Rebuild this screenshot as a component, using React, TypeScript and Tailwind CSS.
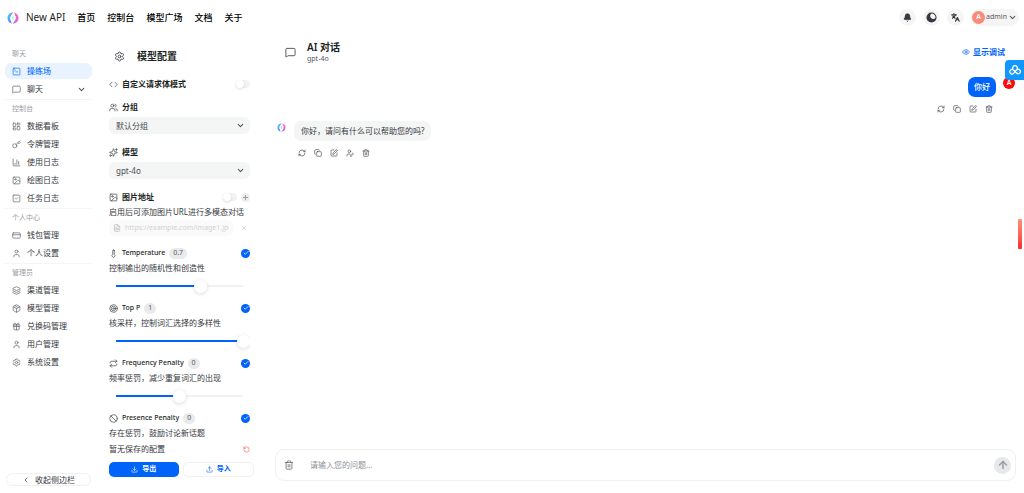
import { useState, type ReactNode } from 'react';
import {
  ArrowUp, Ban, Bell, ChartColumn, Check, ChevronDown, ChevronLeft, Code, Copy, CreditCard, Download, Eye,
  FileText, Gift, Image, Key, Languages, Layers, LayoutDashboard, MessageSquare, Package, Plus, RefreshCw,
  Repeat, RotateCcw, Settings, Sparkles, SquareCheck, SquarePen, SquareTerminal, Target, Thermometer, Trash2,
  Upload, User, UserPen, Users, X, type LucideIcon,
} from 'lucide-react';

type NavItem = { label: string; icon: LucideIcon; active?: boolean; expandable?: boolean };

const topLinks = ['首页', '控制台', '模型广场', '文档', '关于'];

const groups: { title: string; items: NavItem[] }[] = [
  {
    title: '聊天',
    items: [
      { label: '操练场', icon: SquareTerminal, active: true },
      { label: '聊天', icon: MessageSquare, expandable: true },
    ],
  },
  {
    title: '控制台',
    items: [
      { label: '数据看板', icon: LayoutDashboard },
      { label: '令牌管理', icon: Key },
      { label: '使用日志', icon: ChartColumn },
      { label: '绘图日志', icon: Image },
      { label: '任务日志', icon: SquareCheck },
    ],
  },
  {
    title: '个人中心',
    items: [
      { label: '钱包管理', icon: CreditCard },
      { label: '个人设置', icon: User },
    ],
  },
  {
    title: '管理员',
    items: [
      { label: '渠道管理', icon: Layers },
      { label: '模型管理', icon: Package },
      { label: '兑换码管理', icon: Gift },
      { label: '用户管理', icon: User },
      { label: '系统设置', icon: Settings },
    ],
  },
];

const sliders = [
  { id: 'temperature', label: 'Temperature', icon: Thermometer, hint: '控制输出的随机性和创造性', min: 0.1, max: 1, value: 0.7 },
  { id: 'top-p', label: 'Top P', icon: Target, hint: '核采样，控制词汇选择的多样性', min: 0.1, max: 1, value: 1 },
  { id: 'frequency', label: 'Frequency Penalty', icon: Repeat, hint: '频率惩罚，减少重复词汇的出现', min: -2, max: 2, value: 0 },
  { id: 'presence', label: 'Presence Penalty', icon: Ban, hint: '存在惩罚，鼓励讨论新话题', min: -2, max: 2, value: 0 },
];

function Logo({ className }: { className: string }) {
  return (
    <svg viewBox="0 0 24 24" fill="none" className={className} aria-hidden="true">
      <defs>
        <linearGradient id="logo-left" x1="0" y1="0" x2="0" y2="1">
          <stop offset="0" stopColor="#7f8cf7" />
          <stop offset="0.4" stopColor="#35c5f7" />
          <stop offset="0.7" stopColor="#4aa6f5" />
          <stop offset="1" stopColor="#a35cf0" />
        </linearGradient>
        <linearGradient id="logo-right" x1="0" y1="0" x2="0" y2="1">
          <stop offset="0" stopColor="#f56ad0" />
          <stop offset="0.55" stopColor="#f95fc4" />
          <stop offset="1" stopColor="#9a6cf5" />
        </linearGradient>
      </defs>
      <path d="M12.500 1C5.500 1 1 6 1 12s4.500 11 10 11c-2.600-1.600-3.200-3.400-2.600-5.600C6.200 15.500 5.800 13.500 6.400 11 7 7.500 9.500 4 12.500 1z" fill="url(#logo-left)" />
      <path d="M11.500 23C18.500 23 23 18 23 12S18.500 1 13 1c2.600 1.600 3.200 3.400 2.600 5.600 2.200 1.900 2.600 3.900 2 6.400-.6 3.500-3.100 7-6.100 10z" fill="url(#logo-right)" />
      <path d="M12 9.500v5" stroke="#8fdcf8" strokeWidth="2" strokeLinecap="round" />
    </svg>
  );
}

function Header() {
  return (
    <header className="flex h-[35px] shrink-0 items-center pr-[5px] pl-[7px]">
      <Logo className="size-3" />
      <a href="#home" className="ml-[7px] text-[10px] font-normal">New API</a>
      <nav className="ml-3 flex items-center gap-3 text-[9px] font-medium text-black">
        {topLinks.map((l) => (
          <a key={l} href={`#${l}`}>{l}</a>
        ))}
      </nav>
      <div className="ml-auto flex items-center gap-[7px] text-[#35383e]">
        <button aria-label="通知" className="flex size-[17px] items-center justify-center rounded-full bg-[#f5f5f6]">
          <Bell className="size-[9px] fill-current" />
        </button>
        <button aria-label="切换主题" className="flex size-[17px] items-center justify-center rounded-full bg-[#f5f5f6]">
          <svg viewBox="0 0 24 24" className="size-[11px]" aria-hidden="true">
            <circle cx="12" cy="12" r="11" fill="#35383e" />
            <path d="M12 3.200a9 9 0 0 1 8.800 9.300 5.800 5.800 0 0 1-9.800.6 6.500 6.500 0 0 1 1-9.900z" fill="#f5f5f6" />
          </svg>
        </button>
        <button aria-label="切换语言" className="flex size-[17px] items-center justify-center rounded-full bg-[#f5f5f6]">
          <Languages className="size-[9px]" strokeWidth={3} />
        </button>
        <button className="flex h-[17px] items-center gap-px rounded-full bg-[#f5f5f6] pr-[2px] pl-[1px] text-[7px] text-[#55585e]">
          <span className="flex size-[13px] items-center justify-center rounded-full bg-[#fb8a78] text-[7px] font-semibold text-white">A</span>
          admin
          <ChevronDown className="size-[9px]" strokeWidth={3} />
        </button>
      </div>
    </header>
  );
}

function Sidebar() {
  return (
    <aside className="flex w-[97px] shrink-0 flex-col pt-[9px] pb-[7px] pl-[5px]">
      <nav className="mr-[5px] flex flex-col">
        {groups.map((g, gi) => (
          <section key={g.title} className={gi ? 'border-t border-[#f5f5f6]' : 'border-t border-transparent'}>
            <h2 className="pl-[7px] text-[7px] leading-[18px] text-[#9b9ea3]">{g.title}</h2>
            {g.items.map(({ label, icon: Icon, active, expandable }) => (
              <a
                key={label}
                href={`#${label}`}
                className={
                  active
                    ? 'mb-[2px] flex h-4 items-center rounded-md bg-[#e8f3ff] pl-[7px] text-[8px] font-medium text-[#1677ff]'
                    : 'mb-[2px] flex h-4 items-center rounded-md pl-[7px] text-[8px] text-[#35383e]'
                }
              >
                <Icon className={active ? 'mr-[6px] size-[9px]' : 'mr-[6px] size-[9px] text-[#6b6e74]'} />
                {label}
                {expandable && <ChevronDown className="mr-[6px] ml-auto size-[9px] text-[#55585e]" strokeWidth={3} />}
              </a>
            ))}
          </section>
        ))}
      </nav>
      <button className="mt-auto mr-[6px] ml-px flex h-[13px] items-center justify-center gap-[5px] rounded-full border border-[#f0f0f1] text-[8px] text-[#35383e]">
        <ChevronLeft className="size-[8px]" />
        收起侧边栏
      </button>
    </aside>
  );
}

function FieldTitle({ icon: Icon, htmlFor, children }: { icon: LucideIcon; htmlFor: string; children: ReactNode }) {
  return (
    <label htmlFor={htmlFor} className="flex h-3 items-center gap-1 text-[8px] font-semibold">
      <Icon className="size-[9px] text-[#4a4d53]" />
      {children}
    </label>
  );
}

function Toggle({ id }: { id: string }) {
  return (
    <input
      id={id}
      type="checkbox"
      role="switch"
      className="h-2 w-[14px] appearance-none rounded-full bg-[#f3f3f4] before:block before:size-2 before:rounded-full before:bg-white before:shadow-[0_1px_3px_rgba(0,0,0,0.15)]"
    />
  );
}

function SelectField({ id, label, icon, option }: { id: string; label: string; icon: LucideIcon; option: string }) {
  return (
    <div className="mb-3">
      <FieldTitle icon={icon} htmlFor={id}>{label}</FieldTitle>
      <div className="relative mt-1">
        <select id={id} className="block h-[17px] w-full appearance-none rounded-md bg-[#f4f5f5] px-[7px] text-[8px] text-[#4a4d53]">
          <option>{option}</option>
        </select>
        <ChevronDown className="pointer-events-none absolute top-1 right-[5px] size-[9px] text-[#55585e]" strokeWidth={3} />
      </div>
    </div>
  );
}

function SliderField({ id, label, icon: Icon, hint, min, max, value: initial }: (typeof sliders)[number]) {
  const [value, setValue] = useState(initial);
  const ratio = (value - min) / (max - min);
  const stop = `calc(7px + (100% - 14px) * ${ratio})`;
  return (
    <div className="mb-[9px]">
      <div className="flex h-3 items-center">
        <label htmlFor={id} className="flex items-center gap-1 text-[7px] font-medium">
          <Icon className="size-[9px] text-[#4a4d53]" />
          {label}
        </label>
        <span className="ml-1 flex h-[11px] min-w-3 items-center justify-center rounded-full bg-[#e9eaeb] px-1 text-[7px] text-[#55585e]">{value}</span>
        <button aria-label={`启用 ${label}`} className="ml-auto flex size-[9px] items-center justify-center rounded-full bg-[#0064fa] text-white">
          <Check className="size-[6px]" strokeWidth={3} />
        </button>
      </div>
      <p className="mt-[3px] text-[8px] leading-3 text-[#35383e]">{hint}</p>
      <input
        id={id}
        type="range"
        min={min}
        max={max}
        step={0.1}
        value={value}
        onChange={(e) => setValue(Number(e.target.value))}
        style={{
          backgroundImage: `linear-gradient(to right, transparent 7px, #0064fa 7px, #0064fa ${stop}, #f0f1f2 ${stop}, #f0f1f2 calc(100% - 7px), transparent calc(100% - 7px))`,
        }}
        className="mt-[5px] block h-[14px] w-full appearance-none bg-[length:100%_2px] bg-center bg-no-repeat [&::-webkit-slider-thumb]:size-[13px] [&::-webkit-slider-thumb]:appearance-none [&::-webkit-slider-thumb]:rounded-full [&::-webkit-slider-thumb]:bg-white [&::-webkit-slider-thumb]:shadow-[0_1px_4px_rgba(0,0,0,0.15)]"
      />
    </div>
  );
}

function ConfigPanel() {
  return (
    <section className="flex w-[169px] shrink-0 flex-col pr-4 pl-3">
      <h1 className="flex h-[42px] shrink-0 items-center gap-3 pl-[5px] text-[10px] font-semibold">
        <Settings className="size-[11px] text-[#4a4d53]" />
        模型配置
      </h1>
      <div className="min-h-0 flex-1 overflow-hidden">
        <div className="mt-px mb-[11px] flex items-center justify-between">
          <FieldTitle icon={Code} htmlFor="custom-body">自定义请求体模式</FieldTitle>
          <Toggle id="custom-body" />
        </div>
        <SelectField id="group" label="分组" icon={Users} option="默认分组" />
        <SelectField id="model" label="模型" icon={Sparkles} option="gpt-4o" />
        <div className="mb-[11px]">
          <div className="flex items-center justify-between">
            <FieldTitle icon={Image} htmlFor="image-on">图片地址</FieldTitle>
            <span className="flex items-center gap-1">
              <Toggle id="image-on" />
              <button aria-label="添加图片" className="flex size-[9px] items-center justify-center rounded-full bg-[#ececed] text-[#8f9298]">
                <Plus className="size-[7px]" strokeWidth={3} />
              </button>
            </span>
          </div>
          <p className="mt-[3px] text-[8px] leading-3 whitespace-nowrap text-[#35383e]">启用后可添加图片URL进行多模态对话</p>
          <div className="mt-[2px] flex items-center justify-between">
            <label className="flex h-4 w-[124px] items-center gap-1 rounded-md bg-[#fafafa] px-1 text-[#c9cbce]">
              <FileText className="size-2 shrink-0" strokeWidth={3} />
              <input
                aria-label="图片地址"
                disabled
                placeholder="https://example.com/image1.jpg"
                className="w-full min-w-0 text-[7px] placeholder:text-[#d0d2d4]"
              />
            </label>
            <button aria-label="移除图片" className="mr-[3px] text-[#b5b7ba]">
              <X className="size-[6px]" />
            </button>
          </div>
        </div>
        {sliders.map((s) => (
          <SliderField key={s.id} {...s} />
        ))}
      </div>
      <div className="mt-[5px] flex h-[14px] items-center justify-between text-[8px] text-[#35383e]">
        暂无保存的配置
        <button aria-label="重置" className="text-[#f5543f]">
          <RotateCcw className="size-[7px]" />
        </button>
      </div>
      <div className="-mr-1 mt-[6px] mb-4 flex gap-1 text-[7px] font-semibold">
        <button className="flex h-[15px] flex-1 items-center justify-center gap-1 rounded-[5px] bg-[#0064fa] text-white">
          <Download className="size-[7px]" />
          导出
        </button>
        <button className="flex h-[15px] flex-1 items-center justify-center gap-1 rounded-[5px] border border-[#f0f0f1] text-[#0064fa]">
          <Upload className="size-[7px]" />
          导入
        </button>
      </div>
    </section>
  );
}

const messageActions: { label: string; icon: LucideIcon; assistantOnly?: boolean }[] = [
  { label: '重试', icon: RefreshCw },
  { label: '复制', icon: Copy },
  { label: '编辑', icon: SquarePen },
  { label: '切换角色', icon: UserPen, assistantOnly: true },
  { label: '删除', icon: Trash2 },
];

function MessageActions({ assistant = false }: { assistant?: boolean }) {
  return (
    <div className="flex gap-2 text-[#4a4d53]">
      {messageActions
        .filter((a) => assistant || !a.assistantOnly)
        .map(({ label, icon: Icon }) => (
          <button key={label} aria-label={label}>
            <Icon className="size-2" />
          </button>
        ))}
    </div>
  );
}

function Chat() {
  return (
    <main className="flex min-w-0 flex-1 flex-col pr-2 pb-3 pl-[9px]">
      <div className="flex h-[34px] shrink-0 items-center pr-[11px] pl-[10px]">
        <MessageSquare className="size-[11px] text-[#4a4d53]" />
        <div className="ml-[11px]">
          <h2 className="text-[10px] leading-[13px] font-semibold">AI 对话</h2>
          <p className="text-[7px] leading-[10px] text-[#55585e]">gpt-4o</p>
        </div>
        <button className="ml-auto flex items-center gap-[3px] text-[8px] font-semibold text-[#0064fa]">
          <Eye className="size-2" />
          显示调试
        </button>
      </div>
      <div className="flex flex-1 flex-col pt-2">
        <div className="flex items-start justify-end gap-[7px]">
          <div className="flex flex-col items-end">
            <p className="flex h-5 items-center rounded-[7px] bg-[#0064fa] px-[6px] text-[8px] font-medium text-white">你好</p>
            <div className="mt-2 mr-[3px]"><MessageActions /></div>
          </div>
          <span className="mr-px flex size-3 items-center justify-center rounded-full bg-[#fa0a0a] text-[7px] font-semibold text-white">A</span>
        </div>
        <div className="mt-2 flex items-start gap-2 pl-[2px]">
          <Logo className="mt-[2px] size-[9px]" />
          <div>
            <p className="flex h-5 items-center rounded-[7px] bg-[#f4f5f5] px-[7px] text-[8px] text-[#35383e]">你好，请问有什么可以帮助您的吗?</p>
            <div className="mt-2 ml-1"><MessageActions assistant /></div>
          </div>
        </div>
      </div>
      <form className="flex h-8 items-center rounded-[9px] border border-[#f0f0f1] pr-1 pl-2" onSubmit={(e) => e.preventDefault()}>
        <button type="button" aria-label="清空对话" className="text-[#6b6e74]">
          <Trash2 className="size-[10px]" />
        </button>
        <input aria-label="消息" placeholder="请输入您的问题..." className="ml-4 min-w-0 flex-1 text-[8px] outline-none placeholder:text-[#8f9298]" />
        <button aria-label="发送" className="flex size-[17px] items-center justify-center rounded-full bg-[#e6e8ea] text-[#9b9ea3]">
          <ArrowUp className="size-3" strokeWidth={3} />
        </button>
      </form>
    </main>
  );
}

export default function App() {
  return (
    <div className="relative flex h-screen flex-col overflow-hidden bg-white font-['Noto_Sans','Noto_Sans_CJK_SC',sans-serif] text-[#1c1f23]">
      <Header />
      <div className="flex min-h-0 flex-1">
        <Sidebar />
        <ConfigPanel />
        <Chat />
      </div>
      <button aria-label="云盘" className="absolute top-[60px] right-0 flex h-5 w-[19px] items-center justify-center rounded-l-[4px] bg-[#1296ff] text-white">
        <svg viewBox="0 0 24 24" fill="none" stroke="currentColor" strokeWidth="2.600" className="size-3" aria-hidden="true">
          <path d="M7.800 9.800a4.600 4.600 0 1 1 8.400 0" />
          <path d="M9.500 18.500a4.500 4.500 0 1 1-.6-6.600l6.200 6.200a4.500 4.500 0 1 0 0-6.200l-5.600 6.600" strokeLinejoin="round" />
        </svg>
      </button>
      <span className="absolute top-[219px] right-[2px] h-[30px] w-1 rounded-[1px] bg-linear-to-b from-[#ff8f7d] to-[#f92a2a]" />
    </div>
  );
}
